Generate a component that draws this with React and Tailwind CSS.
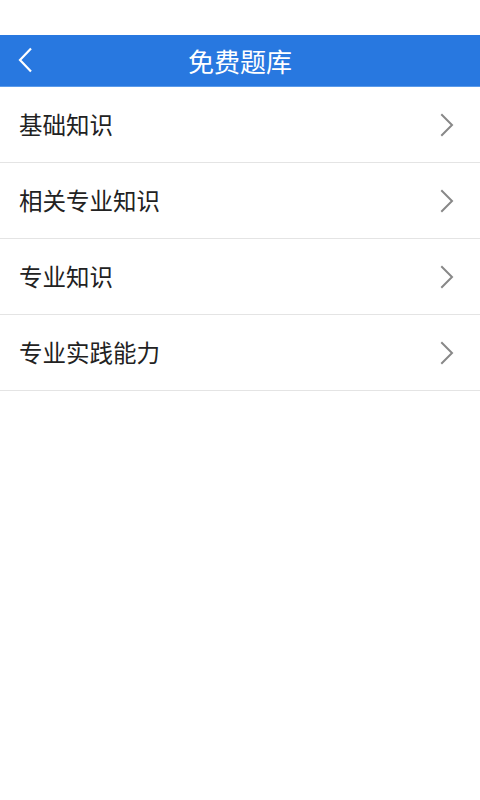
import React from 'react'

const items = ['基础知识', '相关专业知识', '专业知识', '专业实践能力']

const Chevron = ({ className, color, width = 2 }) => (
  <svg className={className} viewBox="0 0 14 24" fill="none">
    <path d="M2 2 L12 12 L2 22" stroke={color} strokeWidth={width} strokeLinecap="square" />
  </svg>
)

const App = () => {
  return (
    <div className="w-[480px] h-[800px] bg-white font-['Noto_Sans_CJK_SC','Noto_Sans',sans-serif]">
      <div className="h-[35px] bg-white" />
      <div className="relative h-[52px] bg-[#2878e0] border-b border-[#5b9bea] flex items-center justify-center">
        <svg className="absolute left-[17px] top-[12px] w-[17px] h-[26px]" viewBox="0 0 17 26" fill="none">
          <path d="M14 1.5 L3 13 L14 24.5" stroke="#ffffff" strokeWidth="2.2" />
        </svg>
        <span className="text-white text-[26px] leading-none">免费题库</span>
      </div>
      <div>
        {items.map((item, index) => (
          <div key={index} className="h-[76px] flex items-center justify-between pl-[19px] pr-[26px] border-b-[1.5px] border-[#e4e4e4]">
            <span className="text-[23.5px] text-[#222] leading-none">{item}</span>
            <Chevron className="w-[14px] h-[24px]" color="#888888" width={2} />
          </div>
        ))}
      </div>
    </div>
  )
}

export default App
